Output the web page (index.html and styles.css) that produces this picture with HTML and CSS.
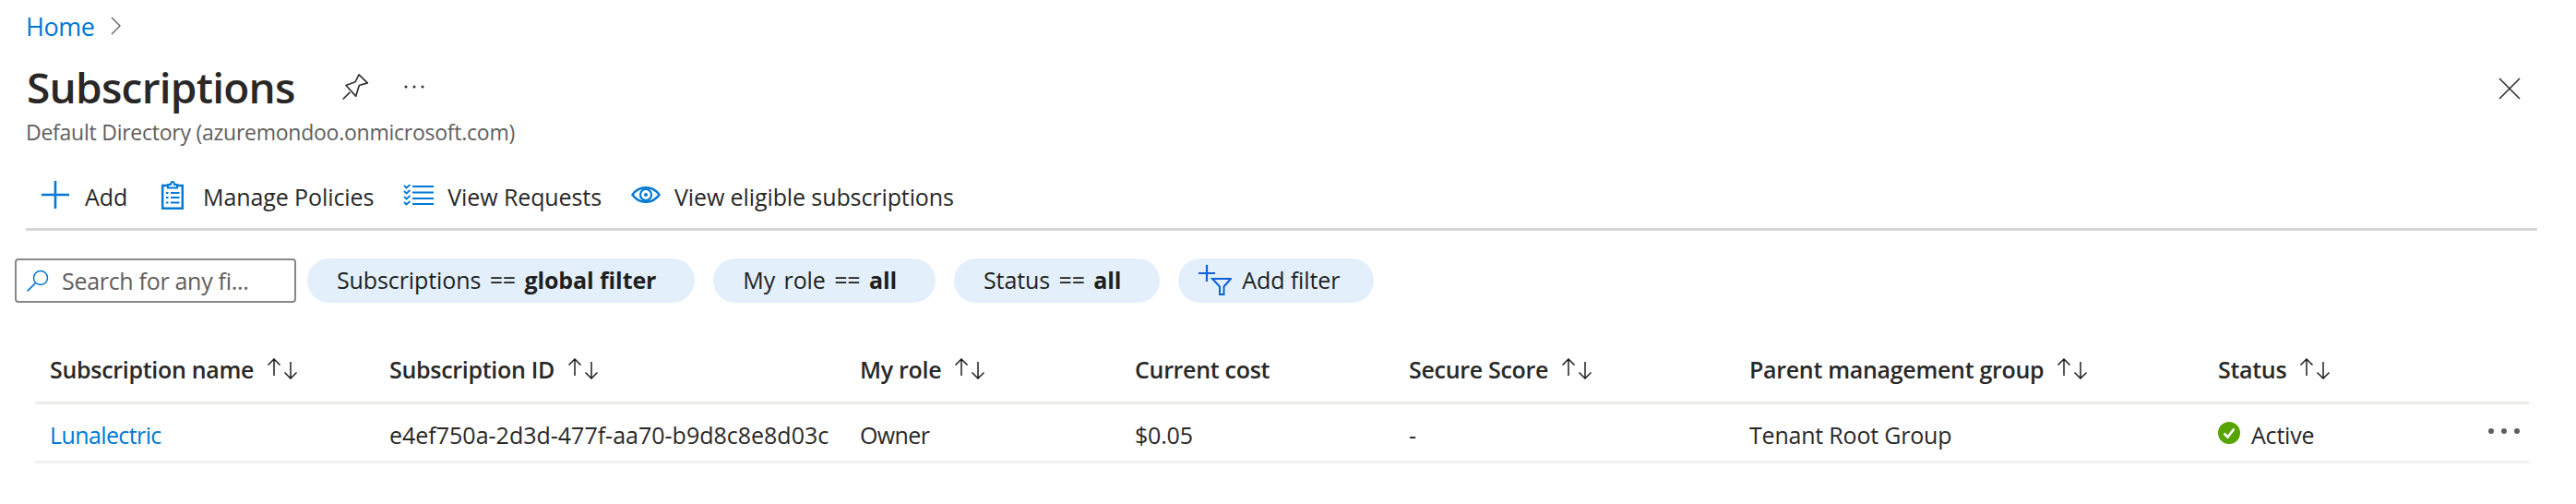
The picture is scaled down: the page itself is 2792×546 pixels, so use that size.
FILE: index.html
```html
<!DOCTYPE html>
<html lang="en">
<head>
<meta charset="utf-8">
<title>Subscriptions</title>
<link rel="stylesheet" href="styles.css">
</head>
<body>
<nav class="crumbs">
  <a class="link" href="#">Home</a>
  <svg class="chev" width="11" height="20" viewBox="0 0 11 20"><path d="M1 1l9 9-9 9" fill="none" stroke="#605e5c" stroke-width="1.3"/></svg>
</nav>
<header class="title-row">
  <h1 class="title">Subscriptions</h1>
  <svg class="pin" width="30" height="32" viewBox="90 60 90 95"><path d="M147 68l28 27-27 8-11 35-32-35 30-11zM118 125l-23 23" fill="none" stroke="#323130" stroke-width="5" stroke-linejoin="round"/></svg>
  <svg class="more" width="22" height="4" viewBox="0 0 22 4"><circle cx="2" cy="2" r="1.5" fill="#323130"/><circle cx="11" cy="2" r="1.5" fill="#323130"/><circle cx="20" cy="2" r="1.5" fill="#323130"/></svg>
  <svg class="close" width="24" height="24" viewBox="0 0 24 24"><path d="M1 1l22 22M23 1L1 23" stroke="#323130" stroke-width="1.6" fill="none"/></svg>
</header>
<p class="subtitle">Default Directory (azuremondoo.onmicrosoft.com)</p>
<div class="toolbar">
  <button class="tool tool-add">
    <svg width="30" height="30" viewBox="0 0 30 30"><path d="M0 15h30M15 0v30" stroke="#0078d4" stroke-width="2.6" fill="none"/></svg>
    <span class="tool-label">Add</span>
  </button>
  <button class="tool tool-policies">
    <svg width="24" height="31" viewBox="0 0 24 31"><path d="M1.200 5h21.600v24.800H1.200z" fill="none" stroke="#0078d4" stroke-width="2.400"/><path d="M7 7.500V4h3c0-4 4-4 4 0h3v3.500z" fill="#fff" stroke="#0078d4" stroke-width="2"/><path d="M5 13h2.500M10 13h9.500M5 18h2.500M10 18h9.500M5 23.500h2.500M10 23.500h9.500" stroke="#0078d4" stroke-width="2.200" fill="none"/></svg>
    <span class="tool-label">Manage Policies</span>
  </button>
  <button class="tool tool-requests">
    <svg width="33" height="23" viewBox="0 0 33 23"><path d="M10 2h23M10 8.500h23M10 15h23M10 21h23" stroke="#0078d4" stroke-width="2.200" fill="none"/><path d="M1 1l2.500 2.500L7.500 0M1 7l2.500 2.500L7.500 6M1 13l2.500 2.500L7.500 12M1 19l2.500 2.500L7.500 18" stroke="#0078d4" stroke-width="1.800" fill="none"/></svg>
    <span class="tool-label">View Requests</span>
  </button>
  <button class="tool tool-eligible">
    <svg width="32" height="18" viewBox="0 0 32 18"><path d="M1.500 9C5 4 10 1.300 16 1.300S27 4 30.500 9C27 14 22 16.700 16 16.700S5 14 1.500 9z" fill="none" stroke="#0078d4" stroke-width="2.400"/><circle cx="16" cy="9" r="6" fill="none" stroke="#0078d4" stroke-width="2.200"/><circle cx="16" cy="9" r="2" fill="#0078d4"/></svg>
    <span class="tool-label">View eligible subscriptions</span>
  </button>
</div>
<div class="filters">
  <label class="search">
    <svg width="24" height="24" viewBox="0 0 24 24"><circle cx="15" cy="9" r="7.500" fill="none" stroke="#0078d4" stroke-width="1.500"/><path d="M9.500 14.500L.7 23.300" stroke="#0078d4" stroke-width="1.700" fill="none"/></svg>
    <span>Search for any fi...</span>
  </label>
  <span class="pill pill-sub">Subscriptions == <b>global filter</b></span>
  <span class="pill pill-role">My role == <b>all</b></span>
  <span class="pill pill-status">Status == <b>all</b></span>
  <span class="pill pill-add"><svg width="36" height="33" viewBox="0 0 36 33"><path d="M0 9h18M9 0v18" stroke="#0f62d6" stroke-width="2.200" fill="none"/><path d="M15 15h20l-7.500 8.500V32h-4.500v-8.500z" fill="none" stroke="#0f62d6" stroke-width="2"/></svg><span>Add filter</span></span>
</div>
<section class="table">
  <div class="row head">
    <div class="cell"><span>Subscription name</span><svg class="sort" width="33" height="23" viewBox="0 0 33 23"><path d="M8 19V1M1.500 7.500L8 1l6.500 6.500M26 4v18M19.500 15.500L26 22l6.500-6.500" stroke="#201f1e" stroke-width="1.500" fill="none"/></svg></div>
    <div class="cell"><span>Subscription ID</span><svg class="sort" width="33" height="23" viewBox="0 0 33 23"><path d="M8 19V1M1.500 7.500L8 1l6.500 6.500M26 4v18M19.500 15.500L26 22l6.500-6.500" stroke="#201f1e" stroke-width="1.500" fill="none"/></svg></div>
    <div class="cell"><span>My role</span><svg class="sort" width="33" height="23" viewBox="0 0 33 23"><path d="M8 19V1M1.500 7.500L8 1l6.500 6.500M26 4v18M19.500 15.500L26 22l6.500-6.500" stroke="#201f1e" stroke-width="1.500" fill="none"/></svg></div>
    <div class="cell"><span>Current cost</span></div>
    <div class="cell"><span>Secure Score</span><svg class="sort" width="33" height="23" viewBox="0 0 33 23"><path d="M8 19V1M1.500 7.500L8 1l6.500 6.500M26 4v18M19.500 15.500L26 22l6.500-6.500" stroke="#201f1e" stroke-width="1.500" fill="none"/></svg></div>
    <div class="cell"><span>Parent management group</span><svg class="sort" width="33" height="23" viewBox="0 0 33 23"><path d="M8 19V1M1.500 7.500L8 1l6.500 6.500M26 4v18M19.500 15.500L26 22l6.500-6.500" stroke="#201f1e" stroke-width="1.500" fill="none"/></svg></div>
    <div class="cell"><span>Status</span><svg class="sort" width="33" height="23" viewBox="0 0 33 23"><path d="M8 19V1M1.500 7.500L8 1l6.500 6.500M26 4v18M19.500 15.500L26 22l6.500-6.500" stroke="#201f1e" stroke-width="1.500" fill="none"/></svg></div>
  </div>
  <div class="row body">
    <div class="cell tight"><a class="link" href="#">Lunalectric</a></div>
    <div class="cell mono-id">e4ef750a-2d3d-477f-aa70-b9d8c8e8d03c</div>
    <div class="cell tight">Owner</div>
    <div class="cell">$0.05</div>
    <div class="cell">-</div>
    <div class="cell">Tenant Root Group</div>
    <div class="cell status">
      <svg class="status-icon" width="24" height="24" viewBox="0 0 24 24"><circle cx="12" cy="12" r="12" fill="#57a300"/><path d="M6.500 12.500l4 4 7-9" fill="none" stroke="#fff" stroke-width="2.600"/></svg>
      <span>Active</span>
      <svg class="row-more" width="34" height="6" viewBox="0 0 34 6"><circle cx="3" cy="3" r="3" fill="#605e5c"/><circle cx="17" cy="3" r="3" fill="#605e5c"/><circle cx="31" cy="3" r="3" fill="#605e5c"/></svg>
    </div>
  </div>
</section>
</body>
</html>
```
FILE: styles.css
```css
* { box-sizing: border-box; }
html, body { margin: 0; height: 100%; overflow: hidden; }
body {
  background: #fff;
  color: #292827;
  font-family: "Open Sans", "Noto Sans", "Liberation Sans", sans-serif;
  font-size: 25px;
  letter-spacing: -0.2px;
}
.link { color: #0078d4; text-decoration: none; }
.crumbs { display: flex; align-items: center; height: 56px; padding-left: 28px; font-size: 27px; letter-spacing: -0.5px; }
.chev { margin-left: 18px; }
.title-row { display: flex; align-items: center; height: 72px; padding: 4px 60px 0 29px; }
.title { margin: 0; font-size: 46px; font-weight: 600; letter-spacing: -0.75px; color: #292827; }
.pin { margin-left: 50px; }
.more { margin-left: 38px; }
.close { margin-left: auto; margin-top: 4px; }
.subtitle { margin: 0; padding-left: 28px; height: 30px; line-height: 30px; font-size: 23px; color: #605e5c; letter-spacing: -0.25px; }
.toolbar { display: flex; align-items: center; height: 92px; margin: 0 42px 0 28px; padding-top: 17px; border-bottom: 3px solid #d6d6d6; }
.tool { display: flex; align-items: center; border: 0; padding: 0; background: none; color: inherit; font: inherit; letter-spacing: -0.1px; }
.tool-label { padding-top: 3px; }
.tool-add { margin-left: 17px; gap: 17px; }
.tool-policies { margin-left: 37px; gap: 21px; }
.tool-requests { margin-left: 32px; gap: 15px; }
.tool-eligible { margin-left: 32px; gap: 15px; }
.filters { display: flex; align-items: center; gap: 20px; margin: 30px 0 0 16px; height: 48px; }
.search { display: flex; align-items: center; gap: 14px; width: 305px; height: 48px; margin-right: -8px; padding-left: 11px; border: 2px solid #8a8886; border-radius: 4px; color: #605e5c; letter-spacing: -0.3px; }
.pill { display: flex; align-items: center; height: 48px; border-radius: 24px; background: #e3f0fb; color: #201f1e; white-space: pre; padding: 0 42px 2px 32px; word-spacing: 3px; letter-spacing: -0.1px; }
.pill b { font-weight: 700; word-spacing: 0; }
.pill-add { padding: 0 37px 2px 22px; gap: 11px; word-spacing: 0; }
.table { margin: 38px 51px 0 38px; }
.row { display: grid; grid-template-columns: 368px 510px 298px 297px 369px 508px 1fr; align-items: center; }
.head { height: 72px; padding-bottom: 2px; border-bottom: 3px solid #edebe9; font-weight: 600; letter-spacing: -0.3px; }
.body { height: 64px; padding-top: 4px; border-bottom: 3px solid #f0f0f0; }
.cell { display: flex; align-items: center; gap: 14px; padding-left: 16px; white-space: pre; }
.tight { letter-spacing: -0.6px; }
.mono-id { letter-spacing: 0; }
.status { gap: 12px; }
.status-icon { margin-top: -4px; }
.row-more { margin-left: auto; margin-right: 10px; margin-top: -8px; }
.sort { flex: none; }
```
